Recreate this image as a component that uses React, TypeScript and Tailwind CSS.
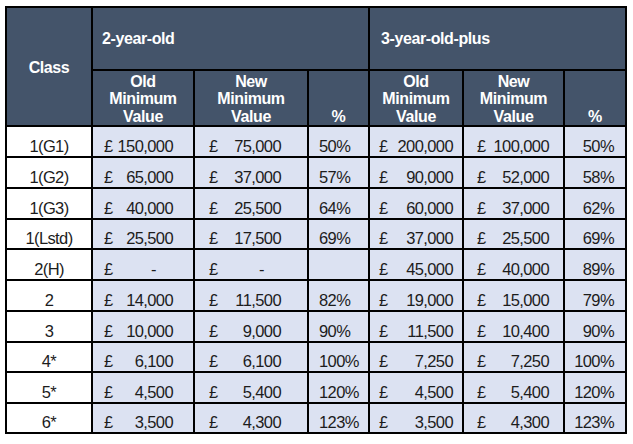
const rows: string[][] = [
  ["1(G1)", "150,000", "75,000", "50%", "200,000", "100,000", "50%"],
  ["1(G2)", "65,000", "37,000", "57%", "90,000", "52,000", "58%"],
  ["1(G3)", "40,000", "25,500", "64%", "60,000", "37,000", "62%"],
  ["1(Lstd)", "25,500", "17,500", "69%", "37,000", "25,500", "69%"],
  ["2(H)", "-", "-", "", "45,000", "40,000", "89%"],
  ["2", "14,000", "11,500", "82%", "19,000", "15,000", "79%"],
  ["3", "10,000", "9,000", "90%", "11,500", "10,400", "90%"],
  ["4*", "6,100", "6,100", "100%", "7,250", "7,250", "100%"],
  ["5*", "4,500", "5,400", "120%", "4,500", "5,400", "120%"],
  ["6*", "3,500", "4,300", "123%", "3,500", "4,300", "123%"],
];

const rowHeights = [
  "h-[31px]",
  "h-[31px]",
  "h-[31px]",
  "h-[30px]",
  "h-[31px]",
  "h-[31px]",
  "h-[31px]",
  "h-[30px]",
  "h-[31px]",
  "h-[30px]",
];

// accounting-style cell: pound sign left, figure right
function Money({ value, pad }: { value: string; pad: string }) {
  return (
    <div className={`flex justify-between ${pad}`}>
      <span>£</span>
      <span className={value === "-" ? "mr-[17px]" : ""}>{value}</span>
    </div>
  );
}

const cell = "border-2 border-black align-bottom pb-[1px] leading-[18px]";
const head = "border-2 border-black bg-[#44546a] text-white font-bold";

export default function App() {
  return (
    <div className="min-h-screen bg-white pl-[5px] pt-[6px] font-['Liberation_Sans',Arial,sans-serif] text-[16.5px] tracking-[-0.6px]">
      <table className="w-[620px] table-fixed border-collapse">
        <colgroup>
          <col className="w-[86px]" />
          <col className="w-[102px]" />
          <col className="w-[114px]" />
          <col className="w-[61px]" />
          <col className="w-[94px]" />
          <col className="w-[101px]" />
          <col className="w-[62px]" />
        </colgroup>
        <thead className="text-[16px] tracking-[-0.4px]">
          <tr className="h-[63px]">
            <th rowSpan={2} className={`${head} text-center align-middle pt-[2px]`}>
              Class
            </th>
            <th colSpan={3} className={`${head} text-left align-middle pl-[9px]`}>
              2-year-old
            </th>
            <th colSpan={3} className={`${head} text-left align-middle pl-[11px]`}>
              3-year-old-plus
            </th>
          </tr>
          <tr className="h-[56px]">
            <th className={`${head} align-bottom leading-[17.5px]`}>
              Old
              <br />
              Minimum
              <br />
              Value
            </th>
            <th className={`${head} align-bottom leading-[17.5px]`}>
              New
              <br />
              Minimum
              <br />
              Value
            </th>
            <th className={`${head} align-bottom leading-[17.5px]`}>%</th>
            <th className={`${head} align-bottom leading-[17.5px]`}>
              Old
              <br />
              Minimum
              <br />
              Value
            </th>
            <th className={`${head} align-bottom leading-[17.5px]`}>
              New
              <br />
              Minimum
              <br />
              Value
            </th>
            <th className={`${head} align-bottom leading-[17.5px]`}>%</th>
          </tr>
        </thead>
        <tbody className="text-[#1c1c1c]">
          {rows.map((r, i) => (
            <tr key={r[0]} className={rowHeights[i]}>
              <td className={`${cell} bg-white text-center`}>{r[0]}</td>
              <td className={`${cell} bg-[#dce2f2]`}>
                <Money value={r[1]} pad="pl-[11px] pr-[20px]" />
              </td>
              <td className={`${cell} bg-[#dce2f2]`}>
                <Money value={r[2]} pad="pl-[14px] pr-[26px]" />
              </td>
              <td className={`${cell} bg-[#dce2f2] pl-[10px] text-left`}>{r[3]}</td>
              <td className={`${cell} bg-[#dce2f2]`}>
                <Money value={r[4]} pad="pl-[9px] pr-[9px]" />
              </td>
              <td className={`${cell} bg-[#dce2f2]`}>
                <Money value={r[5]} pad="pl-[13px] pr-[14px]" />
              </td>
              <td className={`${cell} bg-[#dce2f2] pr-[11px] text-right`}>{r[6]}</td>
            </tr>
          ))}
        </tbody>
      </table>
    </div>
  );
}
